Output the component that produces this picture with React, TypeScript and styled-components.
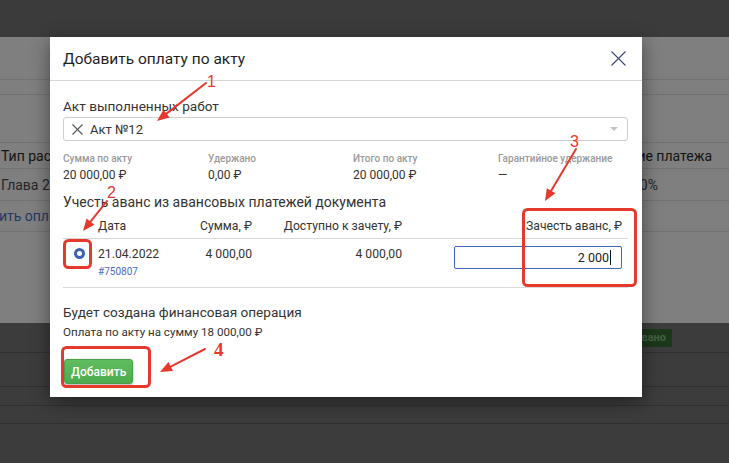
import React from 'react';
import styled, { createGlobalStyle } from 'styled-components';

const RED = '#e5392e';

type ArrowProps = { x1: number; y1: number; x2: number; y2: number };

function Arrow({ x1, y1, x2, y2 }: ArrowProps) {
  const a = Math.atan2(y2 - y1, x2 - x1);
  const len = 12;
  const half = 5;
  const bx = x2 - len * Math.cos(a);
  const by = y2 - len * Math.sin(a);
  const pts = [
    `${x2},${y2}`,
    `${bx + half * Math.sin(a)},${by - half * Math.cos(a)}`,
    `${bx - half * Math.sin(a)},${by + half * Math.cos(a)}`,
  ].join(' ');
  return (
    <g>
      <line x1={x1} y1={y1} x2={bx} y2={by} stroke={RED} strokeWidth={2} strokeLinecap="round" />
      <polygon points={pts} fill={RED} />
    </g>
  );
}

function App() {
  const stats = [
    { label: 'Сумма по акту', value: '20 000,00 ₽' },
    { label: 'Удержано', value: '0,00 ₽' },
    { label: 'Итого по акту', value: '20 000,00 ₽' },
    { label: 'Гарантийное удержание', value: '—' },
  ];

  return (
    <Page>
      <GlobalStyle />
      <TopBar />
      <BackMain>
        <BackRow height={43} />
        <BackRow height={15} />
        <BackRow height={48} />
        <BackRow height={26}>
          <BackCell strong>Тип расхода</BackCell>
          <BackRight>
            <BackCell strong>Назначение платежа</BackCell>
          </BackRight>
        </BackRow>
        <BackRow height={32}>
          <BackCell>Глава 2. Строительные работы</BackCell>
          <BackValue>20%</BackValue>
        </BackRow>
        <BackRow height={31}>
          <BackLink>Добавить оплату</BackLink>
        </BackRow>
      </BackMain>
      <BackFooter>
        <FootRow height={30}>
          <Badge>Согласовано</Badge>
        </FootRow>
        <FootRow height={34} />
        <FootRow height={19} />
        <FootRow height={18} />
      </BackFooter>

      <Overlay>
        <Modal>
          <ModalHeader>
            <Title>Добавить оплату по акту</Title>
            <CloseButton aria-label="Закрыть">
              <svg width="15" height="15" viewBox="0 0 15 15">
                <line x1="0.5" y1="0.5" x2="14.5" y2="14.5" stroke="#3a4672" strokeWidth="1.1" />
                <line x1="14.5" y1="0.5" x2="0.5" y2="14.5" stroke="#3a4672" strokeWidth="1.1" />
              </svg>
            </CloseButton>
          </ModalHeader>
          <ModalBody>
            <FieldLabel>Акт выполненных работ</FieldLabel>
            <Select>
              <svg width="11" height="11" viewBox="0 0 11 11">
                <line x1="0.5" y1="0.5" x2="10.5" y2="10.5" stroke="#555" strokeWidth="1.1" />
                <line x1="10.5" y1="0.5" x2="0.5" y2="10.5" stroke="#555" strokeWidth="1.1" />
              </svg>
              <SelectText>Акт №12</SelectText>
              <Caret />
            </Select>

            <Stats>
              {stats.map((s) => (
                <Stat key={s.label}>
                  <StatLabel>{s.label}</StatLabel>
                  <StatValue>{s.value}</StatValue>
                </Stat>
              ))}
            </Stats>

            <SectionTitle>Учесть аванс из авансовых платежей документа</SectionTitle>
            <Table>
              <HeadRow>
                <span />
                <HeadCell>Дата</HeadCell>
                <HeadCell align="right">Сумма, ₽</HeadCell>
                <HeadCell align="right">Доступно к зачету, ₽</HeadCell>
                <HeadCell align="right" pad={6}>Зачесть аванс, ₽</HeadCell>
              </HeadRow>
              <DataRow>
                <Radio />
                <DateCell>
                  <span>21.04.2022</span>
                  <DocLink>#750807</DocLink>
                </DateCell>
                <Cell align="right">4 000,00</Cell>
                <Cell align="right">4 000,00</Cell>
                <InputCell>
                  <AmountInput>
                    2 000
                    <TextCaret />
                  </AmountInput>
                </InputCell>
              </DataRow>
            </Table>

            <SectionTitle as="div" top={16} size={13.6}>
              Будет создана финансовая операция
            </SectionTitle>
            <Note>Оплата по акту на сумму 18 000,00 ₽</Note>
            <AddButton>Добавить</AddButton>
          </ModalBody>
        </Modal>
      </Overlay>

      <Marks viewBox="0 0 729 463">
        <rect x={64.5} y={240.5} width={26} height={27} rx={4} fill="none" stroke={RED} strokeWidth={3} />
        <rect x={523.5} y={209.5} width={112} height={76} rx={4} fill="none" stroke={RED} strokeWidth={3} />
        <rect x={62.5} y={347.5} width={87} height={39} rx={4} fill="none" stroke={RED} strokeWidth={3} />
        <Arrow x1={206} y1={83} x2={157} y2={121} />
        <Arrow x1={107} y1={201} x2={83} y2={231} />
        <Arrow x1={576} y1={149} x2={545} y2={201} />
        <Arrow x1={205} y1={349} x2={160} y2={372} />
        <MarkText x={207} y={87}>1</MarkText>
        <MarkText x={107} y={198}>2</MarkText>
        <MarkText x={570} y={147}>3</MarkText>
        <MarkText x={214} y={356} serif>4</MarkText>
      </Marks>
    </Page>
  );
}

export default App;

const GlobalStyle = createGlobalStyle`
*,
*::before,
*::after {
  margin: 0;
  padding: 0;
  box-sizing: border-box;
}
body {
  font-family: Roboto, "Liberation Sans", Arial, sans-serif;
  background: #3b3b3b;
}
`;

const Page = styled.main`
  position: relative;
  height: 100vh;
  display: flex;
  flex-direction: column;
  overflow: hidden;
`;

const TopBar = styled.div`
  height: 37px;
  flex-shrink: 0;
  background: #3b3b3b;
`;

const BackMain = styled.div`
  height: 286px;
  flex-shrink: 0;
  background: #7f7f7f;
`;

const BackRow = styled.div<{ height: number }>`
  height: ${(p) => p.height}px;
  border-bottom: 1px solid #727272;
  display: flex;
  align-items: center;
  padding-left: 1px;
`;

const BackCell = styled.span<{ strong?: boolean }>`
  font-size: 14px;
  color: ${(p) => (p.strong ? '#141414' : '#262626')};
  white-space: nowrap;
`;

const BackRight = styled.div`
  margin-left: auto;
  width: 100px;
  display: flex;
  justify-content: flex-end;
  padding-right: 17px;
`;

const BackValue = styled.span`
  margin-left: auto;
  width: 97px;
  font-size: 14px;
  color: #262626;
`;

const BackLink = styled.span`
  font-size: 14px;
  color: #223a64;
  margin-left: -44px;
  white-space: nowrap;
`;

const BackFooter = styled.div`
  flex: 1;
  background: #3c3c3c;
`;

const FootRow = styled.div<{ height: number }>`
  height: ${(p) => p.height}px;
  border-bottom: 1px solid #303030;
  display: flex;
  align-items: center;
`;

const Badge = styled.span`
  margin-left: auto;
  margin-right: 57px;
  height: 18px;
  padding: 0 6px;
  display: flex;
  align-items: center;
  background: #1c381a;
  color: #45613f;
  font-size: 11px;
  font-weight: 700;
`;

const Overlay = styled.div`
  position: absolute;
  inset: 0;
  padding: 37px 0 0 50px;
`;

const Modal = styled.section`
  width: 592px;
  background: #fff;
  box-shadow: 0 5px 18px rgba(0, 0, 0, 0.45);
`;

const ModalHeader = styled.header`
  height: 44px;
  display: flex;
  align-items: center;
  justify-content: space-between;
  padding: 0 16px 0 13px;
  border-bottom: 1px solid #d6d6d6;
`;

const Title = styled.h2`
  font-size: 15.5px;
  font-weight: 400;
  color: #1f1f1f;
`;

const CloseButton = styled.button`
  width: 15px;
  height: 15px;
  border: none;
  background: none;
  display: flex;
`;

const ModalBody = styled.div`
  padding: 17px 14px 13px 13px;
  display: flex;
  flex-direction: column;
  align-items: stretch;
`;

const FieldLabel = styled.label`
  font-size: 13.6px;
  line-height: 17px;
  color: #333;
  margin-bottom: 2px;
`;

const Select = styled.div`
  height: 24px;
  border: 1px solid #cfcfcf;
  border-radius: 3px;
  display: flex;
  align-items: center;
  padding: 0 9px 0 8px;
  gap: 7px;
`;

const SelectText = styled.span`
  font-size: 13px;
  color: #333;
  flex: 1;
`;

const Caret = styled.span`
  width: 0;
  height: 0;
  border-left: 4px solid transparent;
  border-right: 4px solid transparent;
  border-top: 4px solid #c4c4c4;
`;

const Stats = styled.div`
  display: grid;
  grid-template-columns: 145px 145px 145px 1fr;
  margin-top: 12px;
`;

const Stat = styled.div`
  display: flex;
  flex-direction: column;
  gap: 3px;
`;

const StatLabel = styled.span`
  font-size: 10px;
  line-height: 12px;
  font-weight: 500;
  color: #9a9a9a;
  white-space: nowrap;
`;

const StatValue = styled.span`
  font-size: 12px;
  line-height: 14px;
  color: #333;
`;

const SectionTitle = styled.h3<{ top?: number; size?: number }>`
  font-size: ${(p) => p.size ?? 14}px;
  line-height: 17px;
  font-weight: 400;
  color: #333;
  margin-top: ${(p) => p.top ?? 12}px;
`;

const columns = '35px 100px 56px 150px 1fr';

const Table = styled.div`
  margin-top: 7px;
  display: flex;
  flex-direction: column;
`;

const HeadRow = styled.div`
  display: grid;
  grid-template-columns: ${columns};
  padding-bottom: 4px;
  border-bottom: 1px solid #d9d9d9;
`;

const HeadCell = styled.span<{ align?: string; pad?: number }>`
  font-size: 12.2px;
  line-height: 16px;
  color: #333;
  text-align: ${(p) => p.align ?? 'left'};
  padding-right: ${(p) => p.pad ?? 2}px;
  white-space: nowrap;
`;

const DataRow = styled.div`
  display: grid;
  grid-template-columns: ${columns};
  padding: 7px 0 9px;
  border-bottom: 1px solid #d9d9d9;
  align-items: start;
`;

const Radio = styled.span`
  width: 11px;
  height: 11px;
  margin: 2px 0 0 11px;
  border-radius: 50%;
  border: 3.5px solid #3b62b3;
  background: #fff;
`;

const DateCell = styled.div`
  display: flex;
  flex-direction: column;
  gap: 4px;
  font-size: 12.2px;
  line-height: 16px;
  color: #333;
`;

const DocLink = styled.a`
  font-size: 10px;
  line-height: 12px;
  color: #4a6cc4;
`;

const Cell = styled.span<{ align?: string }>`
  font-size: 12.2px;
  line-height: 16px;
  color: #333;
  text-align: ${(p) => p.align ?? 'left'};
  padding-right: 2px;
`;

const InputCell = styled.div`
  display: flex;
  justify-content: flex-end;
  padding-right: 6px;
`;

const AmountInput = styled.div`
  width: 168px;
  height: 23px;
  border: 1px solid #3d68be;
  border-radius: 2px;
  display: flex;
  align-items: center;
  justify-content: flex-end;
  padding-right: 10px;
  font-size: 12.5px;
  color: #222;
`;

const TextCaret = styled.span`
  width: 1px;
  height: 15px;
  background: #111;
  margin-left: 1px;
`;

const Note = styled.p`
  font-size: 11.6px;
  line-height: 14px;
  color: #333;
  margin-top: 4px;
`;

const AddButton = styled.button`
  align-self: flex-start;
  margin: 20px 0 0 1px;
  height: 25px;
  padding: 0 6px;
  border: 1px solid #4a9e4a;
  border-radius: 3px;
  background: linear-gradient(#5fbd5f, #4cab4c);
  color: #fff;
  font-family: inherit;
  font-size: 12px;
  font-weight: 500;
  box-shadow: 0 1px 3px rgba(0, 0, 0, 0.35);
`;

const Marks = styled.svg`
  position: absolute;
  inset: 0;
  width: 729px;
  height: 463px;
  pointer-events: none;
`;

const MarkText = styled.text<{ serif?: boolean }>`
  fill: ${RED};
  font-family: ${(p) => (p.serif ? '"Liberation Serif", serif' : '"Liberation Sans", Arial, sans-serif')};
  font-size: ${(p) => (p.serif ? 19 : 16)}px;
  font-weight: ${(p) => (p.serif ? 700 : 400)};
`;
